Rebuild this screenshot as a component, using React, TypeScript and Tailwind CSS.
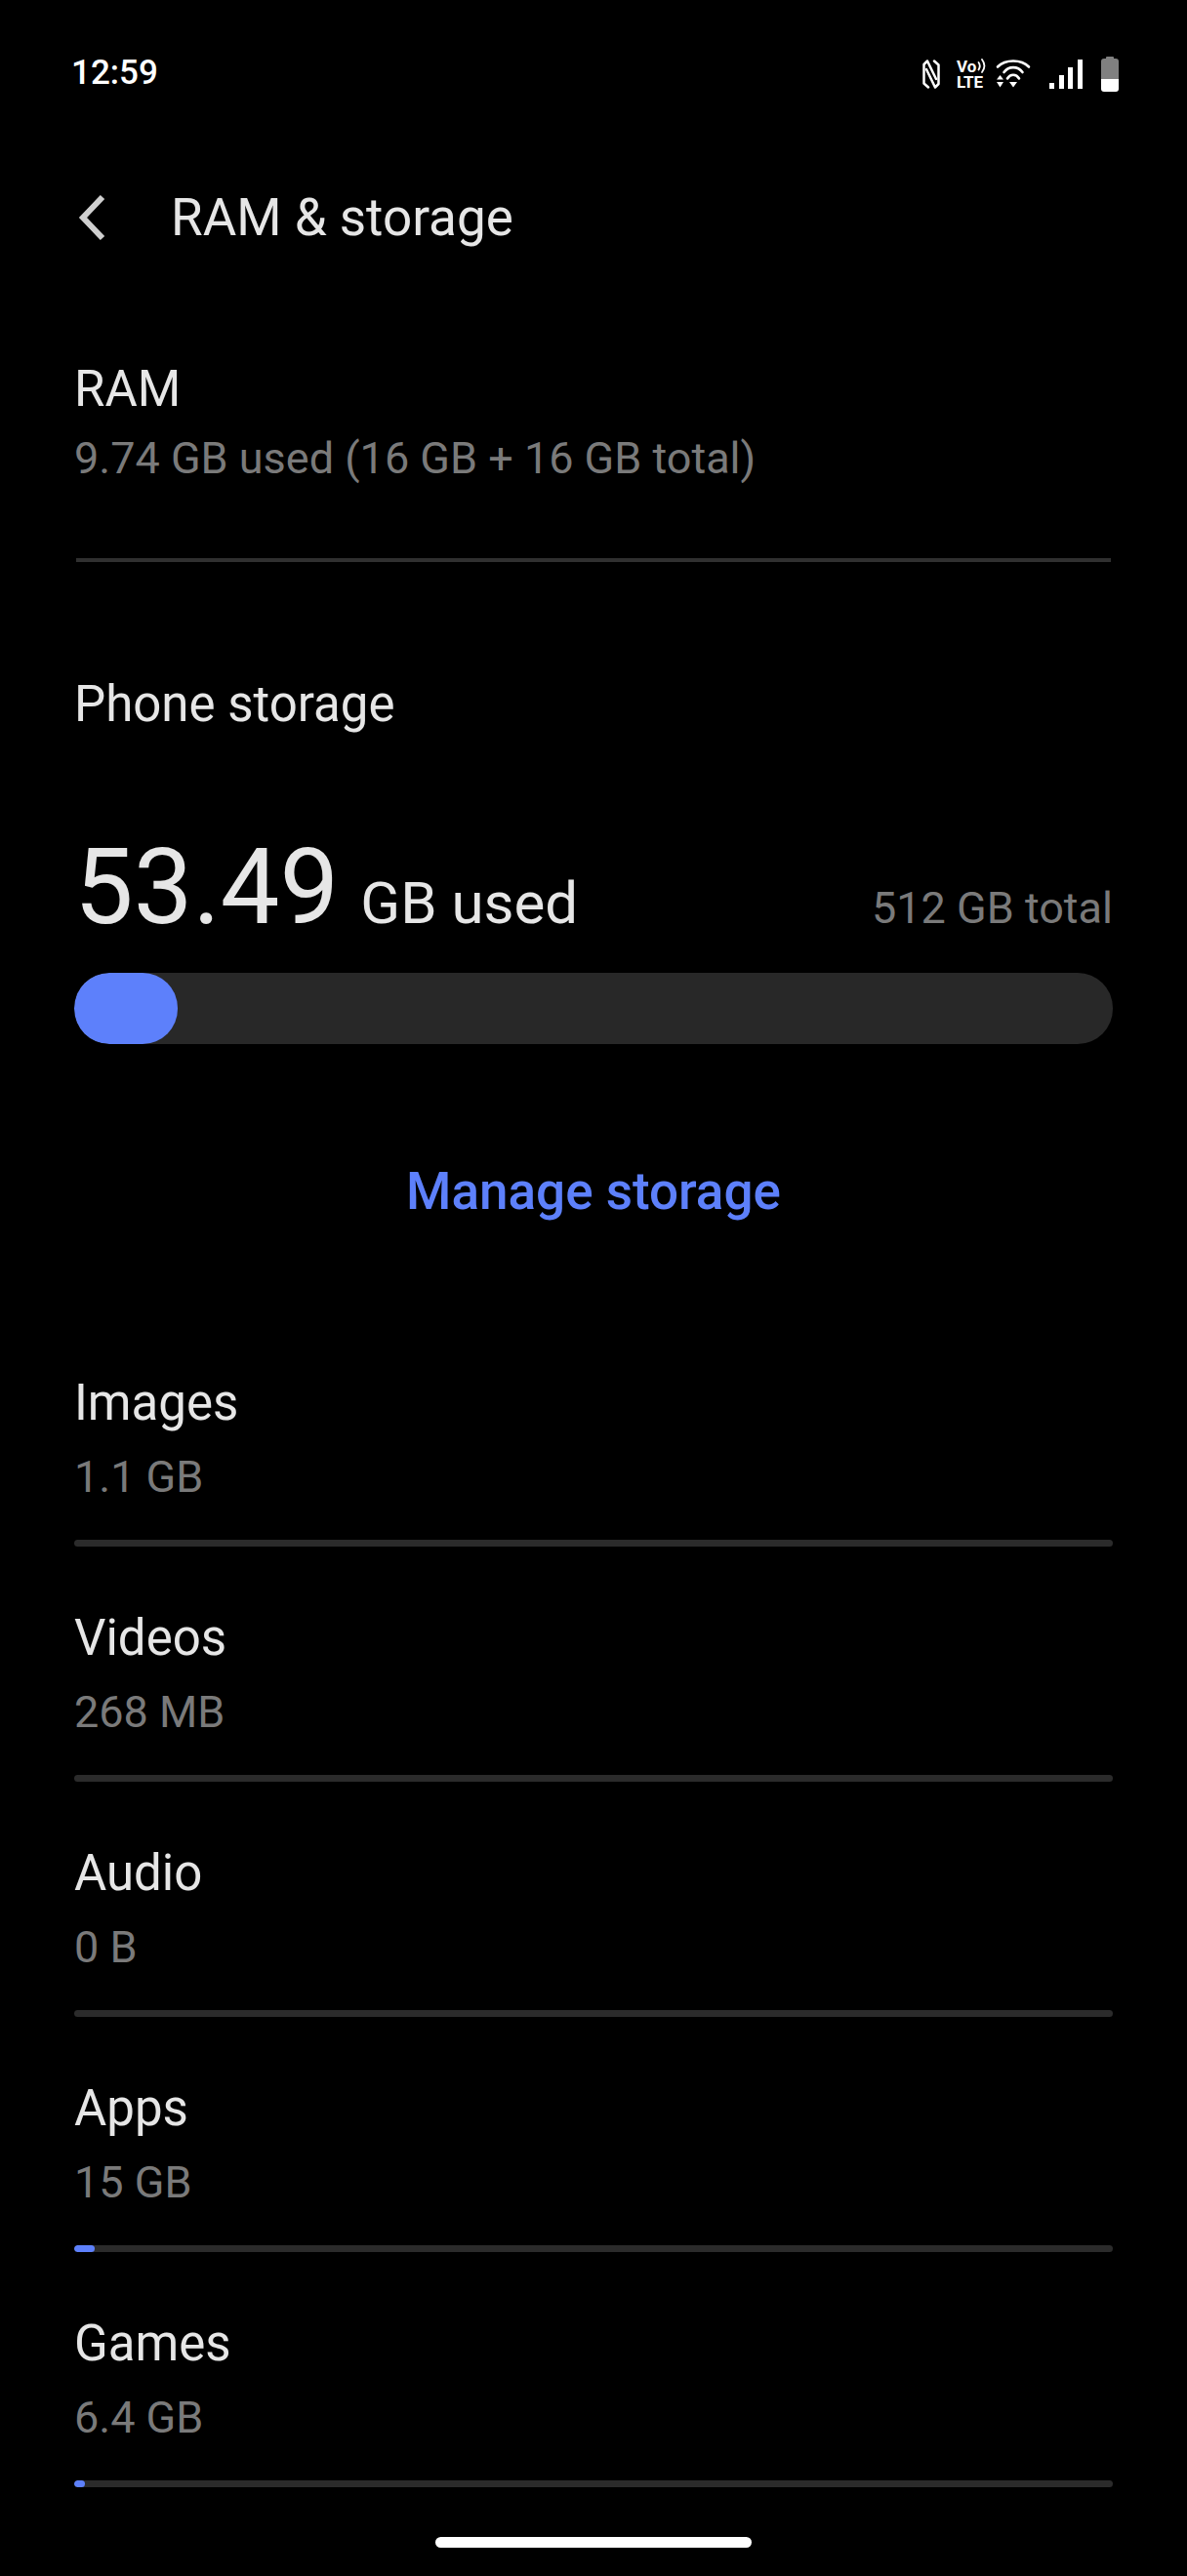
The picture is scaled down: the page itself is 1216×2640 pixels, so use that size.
const categories = [
  { name: "Images", size: "1.1 GB", fill: "" },
  { name: "Videos", size: "268 MB", fill: "" },
  { name: "Audio", size: "0 B", fill: "" },
  { name: "Apps", size: "15 GB", fill: "w-[21px]" },
  { name: "Games", size: "6.4 GB", fill: "w-[11px]" },
]

function StatusIcons() {
  return (
    <div className="flex items-center">
      {/* NFC */}
      <svg width="18" height="30" viewBox="0 0 18 30" className="mr-[17px]" fill="none" stroke="#fff" strokeWidth="2.5" strokeLinecap="round" strokeLinejoin="round">
        <path d="M6 28.5 L1.5 24.5 V5 L5 1.5 L14 20" />
        <path d="M12 1.5 L16.5 5.5 V25 L13 28.5 L4 10" />
      </svg>
      {/* VoLTE */}
      <div className="relative mr-[11px] h-[32px] w-[29px] font-['Roboto',sans-serif] text-[17px] leading-[16px] font-bold text-white">
        <div>Vo</div>
        <div className="tracking-[-0.2px]">LTE</div>
        <svg width="9" height="15" viewBox="0 0 9 15" className="absolute top-0 left-[21px]" fill="none" stroke="#fff" strokeWidth="1.8" strokeLinecap="round">
          <path d="M1.5 4 C3 6 3 9 1.5 11.5" />
          <path d="M5 1 C8 5 8 10 5 14" />
        </svg>
      </div>
      {/* Wi-Fi */}
      <svg width="36" height="30" viewBox="0 0 36 30" className="mr-[19px]" fill="none" stroke="#fff" strokeWidth="2.6" strokeLinecap="round">
        <path d="M2 7.5 C10 -0.5 26 -0.5 34 7.5" />
        <path d="M8.5 13 C13.5 6.5 22.5 6.5 27.5 13" />
        <path d="M12 19.5 C15 14.5 21 14.5 24 19.5" />
        <path d="M14 23 L22 23 L18 28.5 Z M1 20.5 L8 20.5 L4.5 16 Z M1 23 L8 23 L4.5 28.5 Z" fill="#fff" stroke="none" />
      </svg>
      {/* Signal */}
      <div className="mr-[19px] flex h-[30px] items-end gap-[4.7px]">
        <div className="h-[6px] w-[5px] bg-white" />
        <div className="h-[14px] w-[5px] bg-white" />
        <div className="h-[22px] w-[5px] bg-white" />
        <div className="h-[30px] w-[5px] bg-white" />
      </div>
      {/* Battery */}
      <div className="flex h-[36px] w-[18px] flex-col items-center">
        <div className="h-[2px] w-[8px] rounded-t-[1px] bg-[#808080]" />
        <div className="flex w-full flex-1 flex-col overflow-hidden rounded-[3px]">
          <div className="flex-1 bg-[#808080]" />
          <div className="h-[13px] bg-white" />
        </div>
      </div>
    </div>
  )
}

export default function App() {
  return (
    <div className="relative h-[2640px] w-full overflow-hidden bg-black font-['Roboto',sans-serif]">
      {/* Status bar */}
      <div className="flex h-[150px] items-start justify-between pt-[56px] pr-[70px] pl-[73px]">
        <span className="text-[35px] leading-[38px] font-medium text-white">12:59</span>
        <div className="pt-[2px]">
          <StatusIcons />
        </div>
      </div>

      {/* Header */}
      <div className="flex h-[146px] items-center pl-[80px]">
        <svg width="28" height="46" viewBox="0 0 28 46" fill="none" stroke="#cfcfcf" strokeWidth="6" strokeLinejoin="miter">
          <path d="M25 2 L5 23 L25 44" />
        </svg>
        <h1 className="ml-[67px] text-[53px] leading-[60px] text-[#e6e6e6]">RAM &amp; storage</h1>
      </div>

      <div className="px-[76px]">
        {/* RAM */}
        <div className="mx-[2px] h-[280px] border-b-[4px] border-[#303030] pt-[73px]">
          <p className="-ml-[2px] text-[51px] leading-[60px] text-[#e6e6e6]">RAM</p>
          <p className="mt-[15px] -ml-[2px] text-[45px] leading-[52px] text-[#7a7a7a]">9.74 GB used (16 GB + 16 GB total)</p>
        </div>

        {/* Phone storage */}
        <p className="mt-[116px] text-[51px] leading-[60px] text-[#e6e6e6]">Phone storage</p>
        <div className="mt-[101px] flex items-baseline justify-between">
          <div className="flex items-baseline text-[#e6e6e6]">
            <span className="text-[108px] leading-[112px]">53.49</span>
            <span className="ml-[22px] text-[60px] leading-[70px]">GB used</span>
          </div>
          <span className="text-[45px] leading-[52px] text-[#7a7a7a]">512 GB total</span>
        </div>
        <div className="mt-[32px] h-[73px] overflow-hidden rounded-[36px] bg-[#282828]">
          <div className="h-full w-[106px] rounded-[36px] bg-[#5d80fb]" />
        </div>

        <div className="mt-[121px] text-center text-[53px] leading-[60px] font-medium text-[#5d80fb]">Manage storage</div>

        {/* Categories */}
        <div className="mt-[93px]">
          {categories.map((c) => (
            <div key={c.name} className="flex h-[241px] flex-col justify-end">
              <p className="text-[51px] leading-[60px] text-[#e6e6e6]">{c.name}</p>
              <p className="mt-[20px] text-[45px] leading-[52px] text-[#7a7a7a]">{c.size}</p>
              <div className="mt-[38px] h-[7px] overflow-hidden rounded-full bg-[#2b2b2b]">
                {c.fill && <div className={`h-full rounded-full bg-[#5d80fb] ${c.fill}`} />}
              </div>
            </div>
          ))}
        </div>
      </div>

      {/* Home indicator */}
      <div className="absolute bottom-[29px] left-[446px] h-[11px] w-[324px] rounded-full bg-white" />
    </div>
  )
}
